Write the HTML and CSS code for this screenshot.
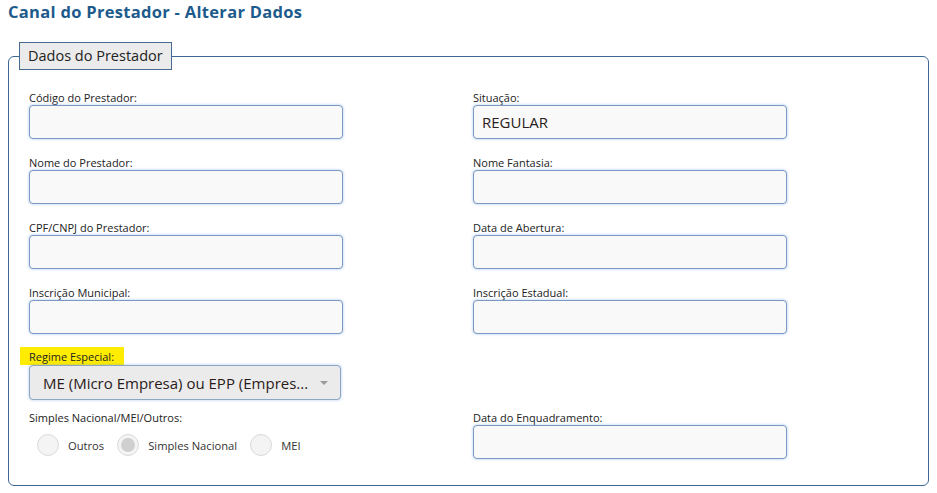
FILE: index.html
```html
<!DOCTYPE html>
<html lang="pt-BR">
<head>
<meta charset="utf-8">
<title>Canal do Prestador - Alterar Dados</title>
<link rel="stylesheet" href="styles.css">
</head>
<body>
<h1 class="page-title">Canal do Prestador - Alterar Dados</h1>
<fieldset class="panel">
  <legend class="panel-legend">Dados do Prestador</legend>
  <div class="form-grid">
    <div class="field">
      <label class="field-label">Código do Prestador:</label>
      <div class="input"></div>
    </div>
    <div class="field">
      <label class="field-label">Situação:</label>
      <div class="input">REGULAR</div>
    </div>
    <div class="field">
      <label class="field-label">Nome do Prestador:</label>
      <div class="input"></div>
    </div>
    <div class="field">
      <label class="field-label">Nome Fantasia:</label>
      <div class="input"></div>
    </div>
    <div class="field">
      <label class="field-label">CPF/CNPJ do Prestador:</label>
      <div class="input"></div>
    </div>
    <div class="field">
      <label class="field-label">Data de Abertura:</label>
      <div class="input"></div>
    </div>
    <div class="field field-tight">
      <label class="field-label">Inscrição Municipal:</label>
      <div class="input"></div>
    </div>
    <div class="field field-tight">
      <label class="field-label">Inscrição Estadual:</label>
      <div class="input"></div>
    </div>
    <div class="field field-regime">
      <label class="field-label highlight">Regime Especial:</label>
      <div class="select">
        <span class="select-text">ME (Micro Empresa) ou EPP (Empres...</span>
        <span class="caret"></span>
      </div>
    </div>
    <div class="field field-regime"></div>
    <div class="field field-last">
      <label class="field-label">Simples Nacional/MEI/Outros:</label>
      <div class="radios">
        <span class="radio"></span><span class="radio-text">Outros</span>
        <span class="radio checked"></span><span class="radio-text">Simples Nacional</span>
        <span class="radio"></span><span class="radio-text">MEI</span>
      </div>
    </div>
    <div class="field field-last">
      <label class="field-label">Data do Enquadramento:</label>
      <div class="input"></div>
    </div>
  </div>
</fieldset>
</body>
</html>
```

FILE: styles.css
```css
html, body {
  background: #ffffff;
}
body {
  margin: 0 8px;
  font-family: "Open Sans", "Noto Sans", "DejaVu Sans", sans-serif;
  color: #222;
}
.page-title {
  margin: 0;
  padding-top: 0;
  font-size: 16.5px;
  letter-spacing: 0.3px;
  line-height: 23px;
  font-weight: 700;
  color: #1d5b8c;
}
.panel {
  margin: 19px 0 0 0;
  padding: 20px 0 26px 20px;
  border: 1px solid #3e6794;
  border-radius: 6px;
  min-width: 0;
}
.panel-legend {
  margin-left: -10px;
  padding: 0 8px 0 8px;
  height: 26px;
  line-height: 26px;
  font-size: 14.5px;
  color: #222;
  background: #ebebeb;
  border: 1px solid #48698f;
}
.form-grid {
  display: grid;
  grid-template-columns: 444px 1fr;
}
.field {
  display: flex;
  flex-direction: column;
  align-items: flex-start;
  margin-bottom: 16px;
}
.field-tight {
  margin-bottom: 13px;
}
.field-regime {
  margin-bottom: 10px;
}
.field-last {
  margin-bottom: 0;
}
.field-label {
  font-size: 11px;
  line-height: 15px;
  color: #222;
}
.highlight {
  background: #ffec00;
  margin-left: -9px;
  padding: 2px 10px 1px 9px;
}
.input {
  box-sizing: border-box;
  width: 314px;
  height: 34px;
  background: #f9f9f9;
  border: 1px solid #7a9ac4;
  border-radius: 4px;
  box-shadow: 0 0 3px rgba(100, 150, 220, 0.55);
  padding: 0 8px;
  font-size: 15px;
  line-height: 32px;
  color: #2a2020;
}
.select {
  box-sizing: border-box;
  width: 312px;
  height: 35px;
  display: flex;
  align-items: center;
  justify-content: space-between;
  padding: 0 12px 0 13px;
  background: #ebebeb;
  border: 1px solid #8ea6c6;
  border-radius: 4px;
  box-shadow: 0 0 3px rgba(100, 150, 220, 0.55);
  font-size: 15px;
  color: #2a1a1a;
}
.caret {
  width: 0;
  height: 0;
  border-left: 4px solid transparent;
  border-right: 4px solid transparent;
  border-top: 4px solid #9a9a9a;
}
.radios {
  display: flex;
  align-items: center;
  margin-top: 9px;
  padding-left: 8px;
}
.radio {
  box-sizing: border-box;
  width: 22px;
  height: 22px;
  border-radius: 50%;
  border: 1px solid #dadada;
  background: #f4f4f4;
  display: flex;
  align-items: center;
  justify-content: center;
}
.radio.checked::after {
  content: "";
  width: 14px;
  height: 14px;
  border-radius: 50%;
  background: #cfcfcf;
}
.radio-text {
  font-size: 11.2px;
  color: #333;
  margin: 0 13px 0 9px;
}
```
